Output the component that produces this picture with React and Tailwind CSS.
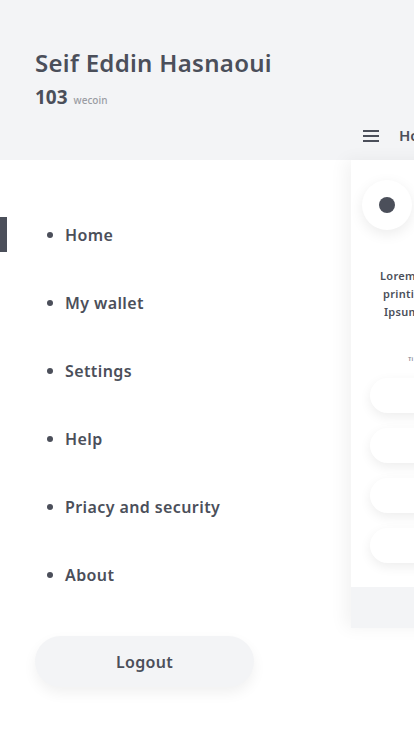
import { useState } from 'react';

const ITEMS = ['Home', 'My wallet', 'Settings', 'Help', 'Priacy and security', 'About'];

const FONT = { fontFamily: '"Noto Sans", "Open Sans", sans-serif' };

export default function App() {
  const [activo, setActivo] = useState('Home');

  return (
    <div className="w-[414px] h-[736px] overflow-hidden bg-white flex text-[#4b4f5a]" style={FONT}>
      {/* Drawer */}
      <div className="w-[351px] shrink-0 flex flex-col">
        <div className="h-[160px] bg-[#f3f4f6] pt-[47px] pl-[35px]">
          <h1 className="text-[24px] leading-[32px] font-semibold tracking-[0.3px]">Seif Eddin Hasnaoui</h1>
          <div className="mt-[6px] flex items-baseline gap-[6px]">
            <span className="text-[19px] font-bold leading-[24px]">103</span>
            <span className="text-[10px] font-medium text-[#9a9ca3]">wecoin</span>
          </div>
        </div>

        <nav className="pt-[57px]">
          <ul className="flex flex-col">
            {ITEMS.map((item) => (
              <li key={item} className="relative h-[68px] flex items-start">
                <button
                  onClick={() => setActivo(item)}
                  className="h-[35px] w-full flex items-center pl-[47px] gap-[12px] text-left"
                >
                  {activo === item && <span className="absolute left-0 top-0 w-[7px] h-[35px] bg-[#4b4f5a]" />}
                  <span className="w-[6px] h-[6px] rounded-full bg-[#4b4f5a]" />
                  <span className="text-[16px] font-semibold tracking-[0.4px]">{item}</span>
                </button>
              </li>
            ))}
          </ul>
        </nav>

        <div className="pl-[35px] mt-[11px]">
          <button className="w-[219px] h-[51px] rounded-full bg-[#f3f4f6] shadow-[0_6px_14px_rgba(0,0,0,0.06)] text-[16px] font-semibold tracking-[0.3px]">
            Logout
          </button>
        </div>
      </div>

      {/* Pantalla principal desplazada */}
      <div className="flex-1 flex flex-col">
        <div className="h-[160px] bg-[#f3f4f6] flex items-end">
          <div className="h-[42px] flex items-start pt-[10px] pl-[12px] gap-[20px]">
            <svg width="16" height="14" viewBox="0 0 16 14" className="mt-[1px]">
              <rect x="0" y="1" width="16" height="2" fill="#4b4f5a" />
              <rect x="0" y="6" width="16" height="2" fill="#4b4f5a" />
              <rect x="0" y="11" width="16" height="2" fill="#4b4f5a" />
            </svg>
            <span className="text-[15px] font-semibold leading-[15px] whitespace-nowrap">Home</span>
          </div>
        </div>
        <div className="shadow-[-6px_0_16px_rgba(0,0,0,0.05)] flex flex-col">
          <div className="h-[427px] bg-white flex flex-col overflow-hidden pl-[11px]">
            <div className="mt-[20px] w-[50px] h-[50px] rounded-full bg-white shadow-[0_4px_14px_rgba(0,0,0,0.08)] flex items-center justify-center">
              <span className="w-[16px] h-[16px] rounded-full bg-[#4b4f5a]" />
            </div>
            <div className="mt-[37px] pl-[18px] text-[11px] font-semibold leading-[18px] tracking-[0.3px] whitespace-nowrap">
              <p>Lorem</p>
              <p className="pl-[3px]">printi</p>
              <p className="pl-[4px]">Ipsum</p>
            </div>
            <p className="mt-[34px] pl-[46px] text-[6px] text-[#8a8c93] font-semibold">Ti</p>
            <div className="mt-[14px] flex flex-col gap-[15px] pl-[8px]">
              {[0, 1, 2, 3].map((i) => (
                <div key={i} className="w-[80px] h-[35px] rounded-l-full bg-white shadow-[0_4px_12px_rgba(0,0,0,0.07)]" />
              ))}
            </div>
          </div>
          <div className="h-[41px] bg-[#f3f4f6]" />
        </div>
      </div>
    </div>
  );
}
